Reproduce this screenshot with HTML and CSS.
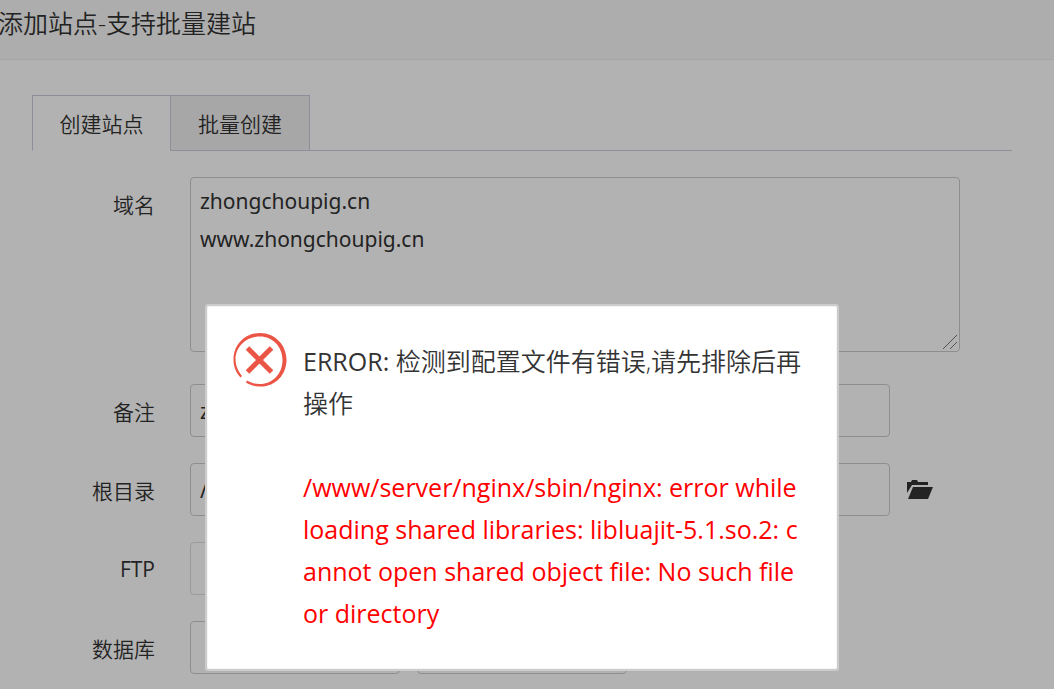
FILE: index.html
```html
<!DOCTYPE html>
<html lang="zh-CN">
<head>
<meta charset="UTF-8">
<meta name="viewport" content="width=device-width, initial-scale=1.0">
<title>添加站点</title>
<link rel="stylesheet" href="styles.css">
</head>
<body>
  <div class="page">
    <h1 class="title">添加站点-支持批量建站</h1>

    <div class="content">
      <div class="tabs">
        <button class="tab active" type="button">创建站点</button>
        <button class="tab" type="button">批量创建</button>
      </div>

      <form class="form">
        <div class="line line-top">
          <label for="domain">域名</label>
          <div class="area">
            <textarea id="domain" spellcheck="false">zhongchoupig.cn
www.zhongchoupig.cn</textarea>
            <svg class="grip" width="16" height="16" viewBox="0 0 16 16"><path d="M1 15L15 1M8 15L15 8" stroke="#555" stroke-width=".8" fill="none"/></svg>
          </div>
        </div>
        <div class="line">
          <label for="remark">备注</label>
          <input id="remark" type="text" value="zhongchoupig.cn">
        </div>
        <div class="line">
          <label for="path">根目录</label>
          <input id="path" type="text" value="/www/wwwroot">
          <button class="folder" type="button" aria-label="选择目录">
            <svg width="26" height="20" viewBox="0 0 26 20"><path d="M0 13V2h4l1-2h5l1 2h10v3H5z" fill="#333"/><path d="M6 7h20l-5 12H1z" fill="#333"/></svg>
          </button>
        </div>
        <div class="line">
          <label class="en" for="ftp">FTP</label>
          <select id="ftp" class="light"><option>不创建</option></select>
        </div>
        <div class="line">
          <label for="db">数据库</label>
          <select id="db"><option>MySQL</option></select>
          <select aria-label="编码"><option>utf8</option></select>
        </div>
      </form>
    </div>
  </div>

  <div class="shade"></div>

  <div class="dialog" role="alertdialog">
    <svg class="icon" width="54" height="54" viewBox="0 0 54 54">
      <path d="M7.5 44.5C5 42 0 35 .5 26C1 11 12 0 27 0C42 0 53.500 12 53.500 27C53.500 42 42 54 27 53.500C21 53.500 16 51.500 13 49.500L14 47.500C18 50 22 51 27 51C39.500 51 49.500 41 49.500 27C49.500 13.500 39.500 3.500 27 3.500C13.500 3.500 3 13 2.500 26C2.500 34 6 39 9 43Z" fill="#ea5545"/>
      <path d="M14.500 15L38.500 39M38.500 15L14.500 39" stroke="#ea5545" stroke-width="5"/>
    </svg>
    <div class="msg">
      <p><span class="en">ERROR:</span> 检测到配置文件有错误,请先排除后再<br>操作</p>
      <p class="detail">/www/server/nginx/sbin/nginx: error while<br>loading shared libraries: libluajit-5.1.so.2: c<br>annot open shared object file: No such file<br>or directory</p>
    </div>
  </div>
</body>
</html>
```

FILE: styles.css
```css
* { margin:0; padding:0; box-sizing:border-box; }
body { font-family:"Open Sans", "Noto Sans CJK SC", sans-serif; font-size:21px; font-weight:350; color:#333; background:#fff; overflow:hidden; }
button, input, select, textarea { font:inherit; color:inherit; }
.title { height:60px; line-height:47px; text-indent:-2px; background:#f8f8f8; border-bottom:1px solid #eee; font-size:25px; font-weight:350; white-space:nowrap; }
.content { padding:35px 42px 0 32px; }

.tabs { display:flex; height:56px; border-bottom:1px solid #ccd; }
.tab { width:140px; height:56px; border:1px solid #ccd; background:#efefef; cursor:pointer; }
.tab.active { width:138px; background:#fff; border-right:0; border-bottom-color:#fff; }

.form { padding-top:26px; }
.line { display:flex; align-items:center; margin-bottom:26px; }
.line-top { align-items:flex-start; margin-bottom:32px; }
.line label { width:123px; margin-right:35px; text-align:right; flex-shrink:0; }
.line-top label { line-height:56px; }
.line input, .line select { width:700px; height:53px; padding:0 9px; border:1px solid #ccc; border-radius:4px; background:#fff; }
.line input, .area textarea { font-family:"Noto Sans", "Noto Sans CJK SC", sans-serif; font-weight:400; }
.line select { width:210px; margin-right:17px; padding:0 20px; }
.line select.light { border-color:#ddd; }
.area { position:relative; flex:0 1 770px; height:175px; }
.area textarea { width:100%; height:100%; padding:4px 9px; border:1px solid #ccc; border-radius:4px; line-height:38px; resize:none; }
.grip { position:absolute; right:2px; bottom:2px; }
.folder { margin-left:17px; border:0; background:none; line-height:0; cursor:pointer; }

.shade { position:fixed; inset:0; background:rgba(0,0,0,.3); }
.dialog { position:fixed; left:205px; top:304px; width:634px; display:flex; align-items:flex-start; padding:27px 26px 35px; background:#fff; border:2px solid #ccc; border-radius:3px; box-shadow:inset 0 0 1px #999; }
.icon { margin-right:16px; flex-shrink:0; }
.msg { padding-top:7px; font-size:25px; line-height:42px; white-space:nowrap; }
.en { font-weight:400; }
.detail { margin-top:42px; color:#f00; font-weight:400; }
```
